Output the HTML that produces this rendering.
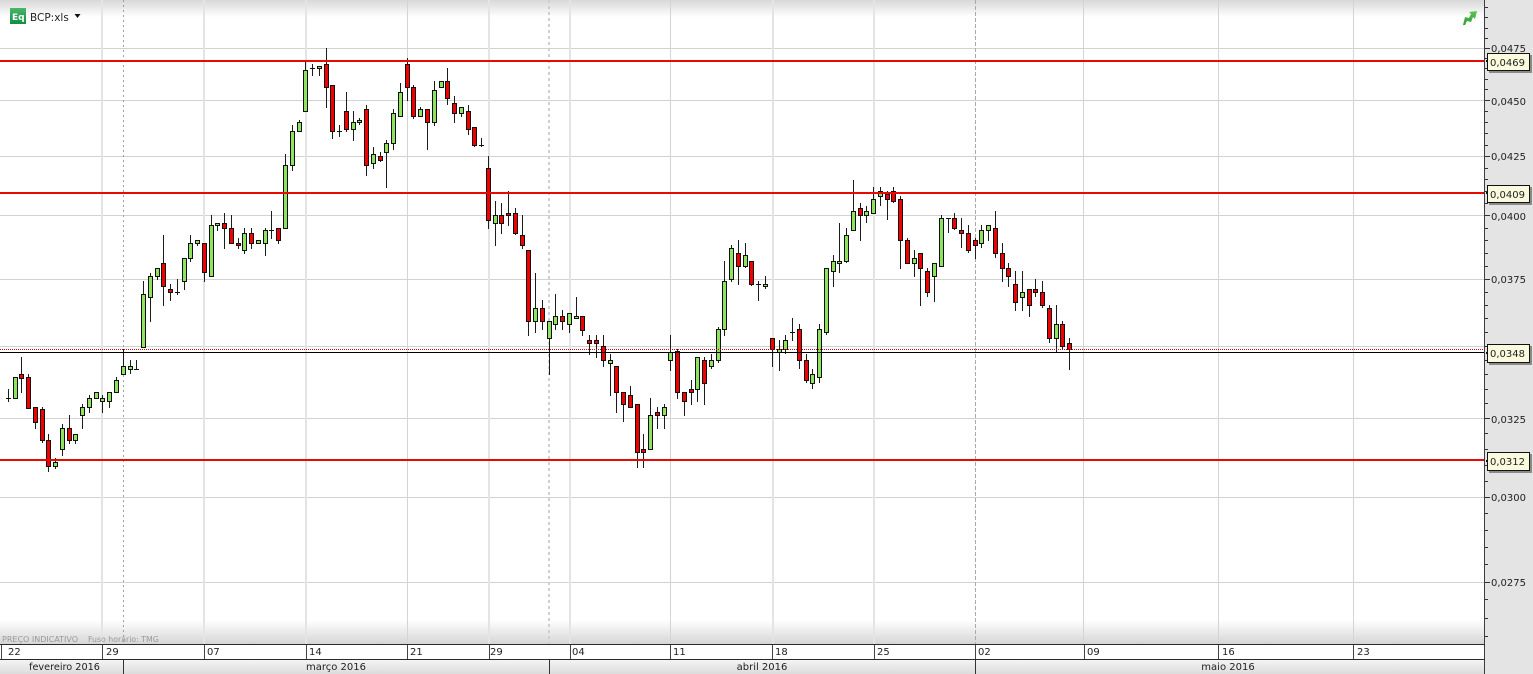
<!DOCTYPE html>
<html><head><meta charset="utf-8"><title>BCP:xls</title>
<style>
html,body{margin:0;padding:0;background:#fff;width:1533px;height:674px;overflow:hidden}
svg{display:block;position:absolute;left:0;top:0}
text{font-family:"DejaVu Sans","Liberation Sans",sans-serif;font-size:10px;fill:#222}
.m{text-anchor:middle}
</style></head><body>
<svg width="1533" height="674" viewBox="0 0 1533 674" xmlns="http://www.w3.org/2000/svg">
<defs>
<linearGradient id="t" x1="0" y1="0" x2="0" y2="1"><stop offset="0" stop-color="#d8d8d8"/><stop offset="1" stop-color="#fff"/></linearGradient>
<linearGradient id="b" x1="0" y1="0" x2="0" y2="1"><stop offset="0" stop-color="#fff"/><stop offset="1" stop-color="#d4d4d4"/></linearGradient>
<linearGradient id="mr" x1="0" y1="0" x2="0" y2="1"><stop offset="0" stop-color="#f4f4f4"/><stop offset="1" stop-color="#dcdcdc"/></linearGradient>
<linearGradient id="eq" x1="0" y1="0" x2="0" y2="1"><stop offset="0" stop-color="#4cb56c"/><stop offset="1" stop-color="#0f8f45"/></linearGradient>
<linearGradient id="ar" x1="0" y1="0" x2="0" y2="1"><stop offset="0" stop-color="#5cc850"/><stop offset="1" stop-color="#2f9a35"/></linearGradient>
</defs>
<rect width="1533" height="674" fill="#fff"/>
<rect x="0" y="0" width="1485" height="17" fill="url(#t)"/>
<rect x="0" y="620" width="1485" height="25" fill="url(#b)"/>
<rect x="1485" y="0" width="48" height="674" fill="#e4e4e4"/>

<g shape-rendering="crispEdges">
<!-- horizontal grid -->
<path fill="none" stroke="#d2d2d2" d="M0 48.500H1485M0 100.500H1485M0 156.500H1485M0 215.500H1485M0 279.500H1485M0 346.500H1485M0 418.500H1485M0 497.500H1485M0 582.500H1485"/>
<!-- vertical grid -->
<path fill="none" stroke="#e4e4e4" stroke-width="2" d="M102 0V645M204 0V645M306 0V645M489 0V645M570 0V645M773 0V645M874 0V645"/>
<path fill="none" stroke="#d4d4d4" d="M407.500 0V645M670.500 0V645M1083.500 0V645M1218.500 0V645M1353.500 0V645"/>
<path fill="none" stroke="#a0a0a0" stroke-dasharray="2 3" d="M123.500 0V645"/>
<path fill="none" stroke="#d0d0d0" stroke-width="2" stroke-dasharray="3 3" d="M549 0V645"/>
<path fill="none" stroke="#aaa" stroke-dasharray="4 2" d="M975.500 0V645"/>

<!-- wicks -->
<path fill="none" stroke="#1c1c1c" d="M8.500 389V402M21.500 357V393M28.500 374V409M35.500 407V429M42.500 407V443M48.500 434V472M55.500 458V469M62.500 424V456M69.500 415V444M75.500 434V444M82.500 404V429M89.500 395V413M102.500 395V413M109.500 392V408M116.500 377V392M123.500 349V374M130.500 360V374M136.500 360V369M143.500 281V347M150.500 273V322M157.500 268V280M163.500 235V306M170.500 284V301M177.500 279V295M184.500 258V290M190.500 235V262M197.500 240V246M204.500 243V282M211.500 215V276M217.500 223V231M224.500 213V249M231.500 215V243M238.500 238V249M244.500 228V254M251.500 228V249M265.500 228V256M271.500 211V239M278.500 228V244M285.500 154V228M292.500 125V171M299.500 120V131M305.500 62V111M312.500 64V76M319.500 66V76M326.500 48V108M332.500 85V139M339.500 125V137M346.500 92V132M353.500 111V141M359.500 118V125M366.500 105V176M373.500 147V169M380.500 152V162M386.500 140V188M393.500 109V150M400.500 83V116M407.500 58V101M413.500 85V119M420.500 107V116M427.500 109V150M434.500 81V126M447.500 68V105M454.500 96V123M461.500 107V117M468.500 105V135M474.500 127V147M481.500 138V147M488.500 156V229M495.500 201V246M501.500 203V234M508.500 191V226M515.500 208V235M522.500 215V249M528.500 250V336M535.500 273V333M542.500 300V330M549.500 321V375M555.500 294V330M562.500 310V330M569.500 313V333M576.500 297V318M582.500 316V336M589.500 335V355M596.500 335V358M603.500 335V367M610.500 354V396M616.500 366V413M623.500 392V422M630.500 386V407M637.500 404V468M643.500 434V468M650.500 398V449M657.500 407V429M664.500 404V429M670.500 335V371M677.500 349V399M684.500 392V416M691.500 380V405M697.500 357V402M704.500 357V405M711.500 354V369M718.500 327V363M724.500 261V336M731.500 245V282M738.500 240V285M745.500 243V268M751.500 261V286M758.500 281V301M765.500 276V289M772.500 338V367M779.500 340V371M785.500 335V354M792.500 318V341M799.500 324V369M806.500 354V383M812.500 369V389M819.500 324V383M826.500 268V335M833.500 255V287M839.500 223V273M846.500 228V263M853.500 180V230M860.500 203V241M866.500 206V223M873.500 187V213M880.500 187V206M887.500 191V220M893.500 187V203M900.500 196V269M907.500 238V263M914.500 250V277M920.500 253V306M927.500 268V297M934.500 263V302M941.500 215V266M948.500 218V233M954.500 213V230M961.500 218V248M968.500 225V253M975.500 238V259M981.500 225V248M988.500 225V241M995.500 211V258M1002.500 243V282M1008.500 263V287M1015.500 271V311M1022.500 271V311M1029.500 289V317M1035.500 279V297M1042.500 281V308M1049.500 305V343M1056.500 305V352M1062.500 321V349M1069.500 338V370"/>
<!-- doji -->
<path fill="none" stroke="#111" d="M6 398.500h5M134 369.500h5M175 292.500h5M269 230.500h5M310 68.500h5M337 131.500h5M479 145.500h5M756 284.500h5M790 332.500h5M946 218.500h5"/>
<!-- green bodies -->
<path fill="#8fe35f" stroke="#111" d="M13.500 377.500h4V398.500h-4zM53.500 462.500h4V466.500h-4zM60.500 428.500h4V449.500h-4zM73.500 434.500h4V440.500h-4zM80.500 407.500h4V415.500h-4zM87.500 398.500h4V407.500h-4zM94.500 392.500h4V398.500h-4zM100.500 398.500h4V401.500h-4zM107.500 392.500h4V401.500h-4zM114.500 380.500h4V392.500h-4zM121.500 366.500h4V374.500h-4zM128.500 366.500h4V369.500h-4zM141.500 294.500h4V347.500h-4zM148.500 276.500h4V297.500h-4zM155.500 268.500h4V276.500h-4zM182.500 258.500h4V281.500h-4zM188.500 243.500h4V258.500h-4zM195.500 240.500h4V243.500h-4zM209.500 225.500h4V276.500h-4zM215.500 223.500h4V225.500h-4zM242.500 233.500h4V250.500h-4zM256.500 240.500h4V243.500h-4zM263.500 230.500h4V243.500h-4zM283.500 165.500h4V228.500h-4zM290.500 131.500h4V165.500h-4zM297.500 122.500h4V131.500h-4zM303.500 70.500h4V111.500h-4zM317.500 66.500h4V68.500h-4zM351.500 122.500h4V129.500h-4zM357.500 120.500h4V122.500h-4zM371.500 154.500h4V163.500h-4zM384.500 143.500h4V152.500h-4zM391.500 113.500h4V143.500h-4zM398.500 92.500h4V116.500h-4zM418.500 109.500h4V116.500h-4zM432.500 90.500h4V122.500h-4zM439.500 81.500h4V87.500h-4zM459.500 107.500h4V113.500h-4zM493.500 215.500h4V223.500h-4zM533.500 308.500h4V321.500h-4zM547.500 321.500h4V338.500h-4zM553.500 316.500h4V324.500h-4zM567.500 313.500h4V324.500h-4zM574.500 316.500h4V318.500h-4zM608.500 360.500h4V363.500h-4zM648.500 415.500h4V449.500h-4zM662.500 407.500h4V415.500h-4zM668.500 352.500h4V360.500h-4zM695.500 357.500h4V389.500h-4zM709.500 360.500h4V366.500h-4zM716.500 329.500h4V360.500h-4zM722.500 281.500h4V329.500h-4zM729.500 248.500h4V279.500h-4zM743.500 255.500h4V266.500h-4zM763.500 284.500h4V286.500h-4zM777.500 349.500h4V352.500h-4zM783.500 340.500h4V349.500h-4zM810.500 374.500h4V383.500h-4zM817.500 329.500h4V377.500h-4zM824.500 268.500h4V332.500h-4zM831.500 261.500h4V271.500h-4zM837.500 261.500h4V263.500h-4zM844.500 235.500h4V261.500h-4zM851.500 211.500h4V230.500h-4zM864.500 211.500h4V215.500h-4zM871.500 199.500h4V213.500h-4zM878.500 191.500h4V196.500h-4zM912.500 258.500h4V263.500h-4zM932.500 263.500h4V276.500h-4zM939.500 218.500h4V266.500h-4zM979.500 230.500h4V243.500h-4zM986.500 225.500h4V230.500h-4zM1020.500 292.500h4V297.500h-4zM1054.500 324.500h4V338.500h-4z"/>
<!-- red bodies -->
<path fill="#f20000" stroke="#111" d="M19.500 374.500h4V378.500h-4zM26.500 377.500h4V408.500h-4zM33.500 407.500h4V422.500h-4zM40.500 409.500h4V440.500h-4zM46.500 440.500h4V466.500h-4zM67.500 428.500h4V440.500h-4zM161.500 263.500h4V286.500h-4zM168.500 289.500h4V292.500h-4zM202.500 243.500h4V272.500h-4zM222.500 223.500h4V228.500h-4zM229.500 228.500h4V243.500h-4zM236.500 243.500h4V245.500h-4zM249.500 233.500h4V243.500h-4zM276.500 228.500h4V240.500h-4zM324.500 64.500h4V87.500h-4zM330.500 85.500h4V131.500h-4zM344.500 111.500h4V129.500h-4zM364.500 109.500h4V165.500h-4zM378.500 156.500h4V160.500h-4zM405.500 64.500h4V87.500h-4zM411.500 87.500h4V116.500h-4zM425.500 109.500h4V122.500h-4zM445.500 81.500h4V98.500h-4zM452.500 103.500h4V113.500h-4zM466.500 111.500h4V129.500h-4zM472.500 127.500h4V145.500h-4zM486.500 168.500h4V220.500h-4zM499.500 215.500h4V223.500h-4zM506.500 213.500h4V215.500h-4zM513.500 213.500h4V233.500h-4zM520.500 235.500h4V245.500h-4zM526.500 250.500h4V321.500h-4zM540.500 308.500h4V321.500h-4zM560.500 316.500h4V321.500h-4zM580.500 316.500h4V330.500h-4zM587.500 340.500h4V343.500h-4zM594.500 340.500h4V343.500h-4zM601.500 346.500h4V360.500h-4zM614.500 366.500h4V392.500h-4zM621.500 392.500h4V404.500h-4zM628.500 395.500h4V407.500h-4zM635.500 404.500h4V452.500h-4zM641.500 449.500h4V452.500h-4zM655.500 412.500h4V415.500h-4zM675.500 351.500h4V392.500h-4zM682.500 392.500h4V401.500h-4zM689.500 389.500h4V392.500h-4zM702.500 360.500h4V383.500h-4zM736.500 253.500h4V266.500h-4zM749.500 261.500h4V284.500h-4zM770.500 338.500h4V349.500h-4zM797.500 329.500h4V360.500h-4zM804.500 360.500h4V380.500h-4zM858.500 208.500h4V215.500h-4zM885.500 194.500h4V199.500h-4zM891.500 191.500h4V201.500h-4zM898.500 199.500h4V240.500h-4zM905.500 240.500h4V263.500h-4zM918.500 253.500h4V268.500h-4zM925.500 271.500h4V292.500h-4zM952.500 218.500h4V228.500h-4zM959.500 230.500h4V233.500h-4zM966.500 233.500h4V250.500h-4zM973.500 240.500h4V245.500h-4zM993.500 228.500h4V253.500h-4zM1000.500 253.500h4V268.500h-4zM1006.500 268.500h4V276.500h-4zM1013.500 284.500h4V302.500h-4zM1027.500 289.500h4V305.500h-4zM1033.500 289.500h4V292.500h-4zM1040.500 292.500h4V305.500h-4zM1047.500 308.500h4V338.500h-4zM1060.500 324.500h4V346.500h-4zM1067.500 343.500h4V349.500h-4z"/>

<!-- level lines -->
<path fill="none" stroke="#e60a00" stroke-width="2" d="M0 61H1485M0 193H1485M0 460H1485"/>
<path fill="none" stroke="#d80000" stroke-dasharray="1 1" d="M0 349.500H1485"/>
<path fill="none" stroke="#000" d="M0 352.500H1485"/>

<!-- axis -->
<path fill="none" stroke="#3c3c3c" d="M1484.500 0V674"/>
<path fill="none" stroke="#333" d="M1485 7.500h3M1485 17.500h3M1485 28.500h3M1485 38.500h3M1485 48.500h5M1485 58.500h3M1485 68.500h3M1485 79.500h3M1485 89.500h3M1485 100.500h5M1485 111.500h3M1485 122.500h3M1485 133.500h3M1485 145.500h3M1485 156.500h5M1485 168.500h3M1485 179.500h3M1485 191.500h3M1485 203.500h3M1485 215.500h5M1485 228.500h3M1485 240.500h3M1485 253.500h3M1485 266.500h3M1485 279.500h5M1485 292.500h3M1485 305.500h3M1485 318.500h3M1485 332.500h3M1485 346.500h5M1485 360.500h3M1485 374.500h3M1485 389.500h3M1485 403.500h3M1485 418.500h5M1485 433.500h3M1485 449.500h3M1485 465.500h3M1485 481.500h3M1485 497.500h5M1485 513.500h3M1485 530.500h3M1485 547.500h3M1485 564.500h3M1485 582.500h5M1485 599.500h3M1485 618.500h3M1485 636.500h3"/>

<!-- date rows -->
<rect x="0" y="645" width="1484" height="14" fill="#fff"/>
<rect x="0" y="660" width="1484" height="14" fill="url(#mr)"/>
<path fill="none" stroke="#2a2a2a" d="M0 644.500H1485M0 659.500H1485"/>
<path fill="none" stroke="#444" d="M1.500 645V659M102.500 645V659M204.500 645V659M306.500 645V659M407.500 645V659M489.500 645V659M570.500 645V659M670.500 645V659M772.500 645V659M874.500 645V659M975.500 645V659M1084.500 645V659M1218.500 645V659M1353.500 645V659"/>
<path fill="none" stroke="#333" d="M123.500 660V674M549.500 660V674M975.500 660V674"/>
</g>

<!-- axis labels -->
<text x="1491" y="52">0,0475</text>
<text x="1491" y="105">0,0450</text>
<text x="1491" y="160">0,0425</text>
<text x="1491" y="220">0,0400</text>
<text x="1491" y="283">0,0375</text>
<text x="1491" y="351">0,0350</text>
<text x="1491" y="423">0,0325</text>
<text x="1491" y="501">0,0300</text>
<text x="1491" y="586">0,0275</text>

<!-- price tags -->
<g shape-rendering="crispEdges">
<rect x="1489" y="55" width="43" height="18" fill="#8a8a8a"/><rect x="1487.500" y="53.500" width="42" height="17" fill="#fafade" stroke="#111"/>
<rect x="1489" y="187" width="43" height="18" fill="#8a8a8a"/><rect x="1487.500" y="185.500" width="42" height="17" fill="#fafade" stroke="#111"/>
<rect x="1489" y="346" width="43" height="19" fill="#8a8a8a"/><rect x="1487.500" y="344.500" width="42" height="18" fill="#fafade" stroke="#111"/>
<rect x="1489" y="454" width="43" height="19" fill="#8a8a8a"/><rect x="1487.500" y="452.500" width="42" height="18" fill="#fafade" stroke="#111"/>
<path fill="#111" d="M1486 60h2v2h-2zM1486 192h2v2h-2zM1486 352h2v2h-2zM1486 460h2v2h-2z"/>
</g>
<text x="1490" y="66">0,0469</text>
<text x="1490" y="198">0,0409</text>
<text x="1490" y="357">0,0348</text>
<text x="1490" y="465">0,0312</text>

<!-- date labels -->
<text x="8" y="655">22</text>
<text x="106" y="655">29</text>
<text x="207" y="655">07</text>
<text x="309" y="655">14</text>
<text x="410" y="655">21</text>
<text x="490" y="655">29</text>
<text x="572" y="655">04</text>
<text x="673" y="655">11</text>
<text x="775" y="655">18</text>
<text x="877" y="655">25</text>
<text x="978" y="655">02</text>
<text x="1087" y="655">09</text>
<text x="1222" y="655">16</text>
<text x="1357" y="655">23</text>
<text class="m" x="64.500" y="670" style="font-size:9.700px">fevereiro 2016</text>
<text class="m" x="336" y="670">março 2016</text>
<text class="m" x="762" y="670">abril 2016</text>
<text class="m" x="1228" y="670">maio 2016</text>

<text x="2" y="642" style="font-size:8px;fill:#999">PREÇO INDICATIVO</text>
<text x="88" y="642" style="font-size:7.800px;fill:#999">Fuso horário: TMG</text>

<!-- header -->
<rect x="10" y="8" width="16" height="16" fill="url(#eq)"/>
<text x="12" y="20" style="font-size:9px;font-weight:bold;fill:#fff">Eq</text>
<text x="30" y="21" style="font-size:10.500px">BCP:xls</text>
<path d="M74.500 14h6l-3 4z" fill="#111"/>
<path d="M1463 25l2-8 4 1 2-4-2-2 8-1-2 8-2-2-2 5-4-1-2 4z" fill="url(#ar)"/>
</svg>
</body></html>
